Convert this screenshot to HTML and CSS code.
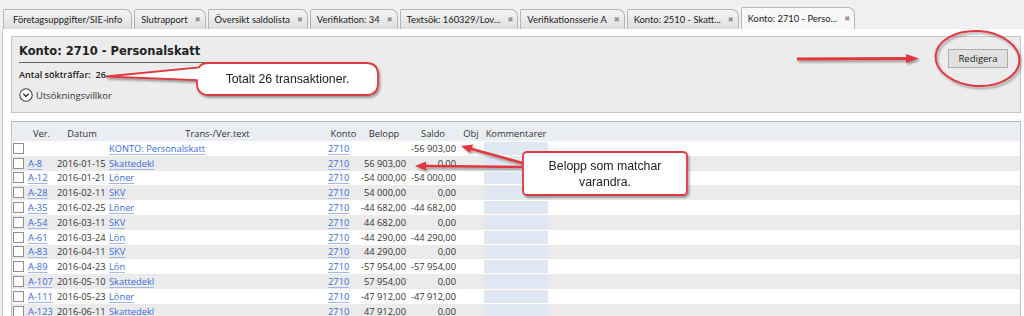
FILE: index.html
```html
<!DOCTYPE html>
<html lang="sv">
<head>
    <meta charset="UTF-8">
    <title>Konto: 2710 - Personalskatt</title>
    <link rel="stylesheet" href="styles.css">
</head>
<body>
    <div class="tabs">
        <div class="tab"><span>Företagsuppgifter/SIE-info</span></div>
        <div class="tab"><span>Slutrapport</span><span class="close">✖</span></div>
        <div class="tab"><span>Översikt saldolista</span><span class="close">✖</span></div>
        <div class="tab"><span>Verifikation: 34</span><span class="close">✖</span></div>
        <div class="tab"><span>Textsök: 160329/Lov...</span><span class="close">✖</span></div>
        <div class="tab"><span>Verifikationsserie A</span><span class="close">✖</span></div>
        <div class="tab"><span>Konto: 2510 - Skatt...</span><span class="close">✖</span></div>
        <div class="tab active"><span>Konto: 2710 - Perso...</span><span class="close">✖</span></div>
    </div>

    <div class="main">
        <div class="panel">
            <div class="info">
                <div class="title">Konto: 2710 - Personalskatt</div>
                <div class="hits">Antal sökträffar:&nbsp; 26</div>
                <div class="filter">
                    <svg width="14" height="14" viewBox="0 0 14 14">
                        <circle cx="7" cy="7" r="6.2" fill="#fff" stroke="#444" stroke-width="1.1"/>
                        <path d="M4.3 5.8 L7 8.5 L9.7 5.8" fill="none" stroke="#333" stroke-width="1.5"/>
                    </svg>
                    Utsökningsvillkor
                </div>
            </div>
            <button class="btn">Redigera</button>
        </div>

        <div class="grid">
            <div class="row head">
                <span></span><span>Ver.</span><span>Datum</span><span>Trans-/Ver.text</span><span>Konto</span><span>Belopp</span><span>Saldo</span><span>Obj</span><span>Kommentarer</span><span></span>
            </div>
            <div class="rows">
                <div class="row"><span class="chk"></span><span></span><span></span><a>KONTO: Personalskatt</a><a>2710</a><span class="num"></span><span class="num">-56 903,00</span><span></span><span class="cm"></span><span></span></div>
                <div class="row"><span class="chk"></span><a>A-8</a><span>2016-01-15</span><a>Skattedekl</a><a>2710</a><span class="num">56 903,00</span><span class="num">0,00</span><span></span><span class="cm"></span><span></span></div>
                <div class="row"><span class="chk"></span><a>A-12</a><span>2016-01-21</span><a>Löner</a><a>2710</a><span class="num">-54 000,00</span><span class="num">-54 000,00</span><span></span><span class="cm"></span><span></span></div>
                <div class="row"><span class="chk"></span><a>A-28</a><span>2016-02-11</span><a>SKV</a><a>2710</a><span class="num">54 000,00</span><span class="num">0,00</span><span></span><span class="cm"></span><span></span></div>
                <div class="row"><span class="chk"></span><a>A-35</a><span>2016-02-25</span><a>Löner</a><a>2710</a><span class="num">-44 682,00</span><span class="num">-44 682,00</span><span></span><span class="cm"></span><span></span></div>
                <div class="row"><span class="chk"></span><a>A-54</a><span>2016-03-11</span><a>SKV</a><a>2710</a><span class="num">44 682,00</span><span class="num">0,00</span><span></span><span class="cm"></span><span></span></div>
                <div class="row"><span class="chk"></span><a>A-61</a><span>2016-03-24</span><a>Lön</a><a>2710</a><span class="num">-44 290,00</span><span class="num">-44 290,00</span><span></span><span class="cm"></span><span></span></div>
                <div class="row"><span class="chk"></span><a>A-83</a><span>2016-04-11</span><a>SKV</a><a>2710</a><span class="num">44 290,00</span><span class="num">0,00</span><span></span><span class="cm"></span><span></span></div>
                <div class="row"><span class="chk"></span><a>A-89</a><span>2016-04-23</span><a>Lön</a><a>2710</a><span class="num">-57 954,00</span><span class="num">-57 954,00</span><span></span><span class="cm"></span><span></span></div>
                <div class="row"><span class="chk"></span><a>A-107</a><span>2016-05-10</span><a>Skattedekl</a><a>2710</a><span class="num">57 954,00</span><span class="num">0,00</span><span></span><span class="cm"></span><span></span></div>
                <div class="row"><span class="chk"></span><a>A-111</a><span>2016-05-23</span><a>Löner</a><a>2710</a><span class="num">-47 912,00</span><span class="num">-47 912,00</span><span></span><span class="cm"></span><span></span></div>
                <div class="row"><span class="chk"></span><a>A-123</a><span>2016-06-11</span><a>Skattedekl</a><a>2710</a><span class="num">47 912,00</span><span class="num">0,00</span><span></span><span class="cm"></span><span></span></div>
            </div>
        </div>
    </div>

    <!-- annotations drawn over the screenshot -->
    <div class="notes">
        <svg width="1024" height="316" viewBox="0 0 1024 316">
            <defs>
                <filter id="sh" x="-20%" y="-20%" width="140%" height="160%">
                    <feDropShadow dx="1.5" dy="2" stdDeviation="1.3" flood-color="#000" flood-opacity="0.35"/>
                </filter>
            </defs>
            <g filter="url(#sh)" stroke="#e0393f" fill="#e0393f">
                <line x1="797" y1="59" x2="908" y2="58.5" stroke-width="3"/>
                <polygon points="906,54 919,58.5 906,63" stroke="none"/>
                <ellipse cx="977.5" cy="58.5" rx="42" ry="27.5" fill="none" stroke-width="2" transform="rotate(4 977.5 58.5)"/>
                <line x1="526" y1="164" x2="470" y2="148.5" stroke-width="2.5"/>
                <polygon points="461,146 473,144.5 470,153" stroke="none"/>
                <line x1="526" y1="167" x2="425" y2="166" stroke-width="2.5"/>
                <polygon points="415,166 426,161.5 426,170.5" stroke="none"/>
                <path d="M209 63 H366 Q378 63 378 75 V83 Q378 95 366 95 H209 Q197 95 197 83 V80 L106 76.5 L199 67.5 Q201 63 209 63 Z" fill="#fff" stroke-width="1.8"/>
                <rect x="523" y="152" width="164" height="43" rx="4" fill="#fff" stroke-width="1.8"/>
            </g>
        </svg>
        <div class="bubble one">Totalt 26 transaktioner.</div>
        <div class="bubble two">Belopp som matchar<br>varandra.</div>
    </div>
</body>
</html>
```

FILE: styles.css
```css
body {
    margin: 0;
    width: 1024px;
    height: 316px;
    overflow: hidden;
    position: relative;
    background: #f0f0f0;
    font-family: "Open Sans", sans-serif;
    color: #222;
}
.tabs {
    display: flex;
    align-items: flex-end;
    gap: 2px;
    height: 29px;
    padding-left: 3px;
    box-sizing: border-box;
}
.tab {
    height: 20px;
    box-sizing: border-box;
    display: flex;
    align-items: center;
    gap: 7px;
    padding: 0 4px 0 6px;
    border: 1px solid #b5b5b5;
    border-bottom: 0;
    border-radius: 2px 7px 0 0;
    background: linear-gradient(#f5f5f5, #dedede);
    font-family: Lato, sans-serif;
    font-size: 9.4px;
    white-space: nowrap;
}
.tab:first-child {
    padding: 0 9px 0 9px;
}
.tab.active {
    height: 22px;
    background: #f8f8f8;
}
.close {
    font-family: "DejaVu Sans", sans-serif;
    font-size: 7px;
    color: #8c8c8c;
}
.main {
    height: 287px;
    box-sizing: border-box;
    margin-left: 2px;
    padding: 7px 3px 0 8px;
    background: #fff;
    border-left: 1px solid #c9c9c9;
}
.panel {
    height: 77px;
    box-sizing: border-box;
    display: flex;
    justify-content: space-between;
    align-items: flex-start;
    padding: 7px 12px 0 7px;
    background: #ececec;
    border: 1px solid #c4c4c4;
}
.title {
    width: 273px;
    padding-bottom: 3px;
    border-bottom: 1px solid #666;
    font-family: "DejaVu Sans", sans-serif;
    font-weight: bold;
    font-size: 11.5px;
    line-height: 15px;
    color: #222;
}
.hits {
    margin-top: 5px;
    font-size: 9.1px;
    font-weight: 600;
    line-height: 14px;
}
.filter {
    display: flex;
    align-items: center;
    gap: 3px;
    margin-top: 6px;
    font-size: 9.5px;
    color: #333;
}
.btn {
    width: 60px;
    height: 19px;
    margin-top: 5px;
    padding: 0;
    background: #e1e1e1;
    border: 1px solid #adadad;
    font-family: "Open Sans", sans-serif;
    font-size: 9.5px;
    color: #222;
}
.grid {
    margin-top: 8px;
    border-top: 1px solid #a9b9ca;
    border-left: 1px solid #b8c4d0;
    border-right: 1px solid #b8c4d0;
}
.row {
    display: grid;
    grid-template-columns: 15px 29px 52px 219px 33px 48px 50px 26px 64px 1fr;
    align-items: center;
    height: 14.8px;
    font-size: 9.3px;
    color: #333;
    white-space: nowrap;
}
.row > * {
    padding-left: 1px;
}
.row.head {
    height: 19px;
    box-sizing: border-box;
    padding-top: 3px;
    background: #eaeef2;
    text-align: center;
}
.row.head > * {
    padding-left: 0;
}
.rows .row:nth-child(even) {
    background: #ebebeb;
}
.row a {
    color: #3a6dd6;
    text-decoration: underline;
    text-decoration-color: #a3b8e6;
    text-underline-offset: 2px;
}
.row .num {
    text-align: right;
    padding: 0 2px 0 0;
}
.chk {
    width: 11px;
    height: 11px;
    box-sizing: border-box;
    margin-left: 1px;
    padding: 0;
    background: #fff;
    border: 1px solid #8f8f8f;
}
.cm {
    align-self: stretch;
    margin: 1px 0;
    background: #dfe7f3;
}
.notes {
    position: absolute;
    left: 0;
    top: 0;
    width: 1024px;
    height: 316px;
    pointer-events: none;
}
.notes svg {
    position: absolute;
    left: 0;
    top: 0;
}
.bubble {
    position: absolute;
    display: flex;
    align-items: center;
    justify-content: center;
    text-align: center;
    font-family: "Liberation Sans", Arial, sans-serif;
    font-size: 12.3px;
    line-height: 16px;
    color: #222;
}
.bubble.one {
    left: 197px;
    top: 63px;
    width: 181px;
    height: 32px;
}
.bubble.two {
    left: 523px;
    top: 152px;
    width: 164px;
    height: 43px;
}
```
